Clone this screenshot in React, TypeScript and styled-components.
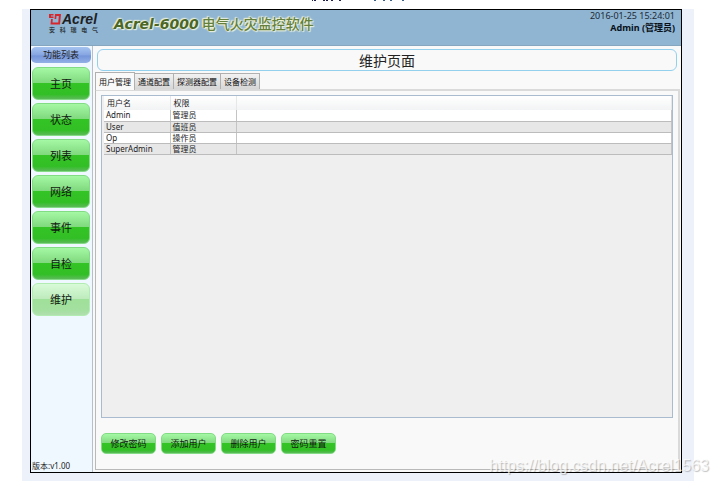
import React, { useState } from "react";
import styled, { createGlobalStyle } from "styled-components";

const Global = createGlobalStyle`
  * { box-sizing: border-box; }
  html, body, #root { height: 100%; }
  body { margin: 0; background: #fff; color: #222; overflow: hidden; font-family: "Noto Sans", "Noto Sans CJK SC", sans-serif; }
  button { font-family: inherit; cursor: pointer; }
`;

const Page = styled.div`
  position: relative;
  display: flex;
  flex-direction: column;
  height: 100vh;
  padding: 0 25px 4px 22px;
`;

const Caption = styled.div`
  display: flex;
  flex: none;
  justify-content: center;
  height: 9px;
`;

const Backdrop = styled.div`
  flex: 1;
  display: flex;
  min-height: 0;
  padding: 0 12px 8px 8px;
  background: #edf1fa;
`;

const Window = styled.div`
  flex: 1;
  display: flex;
  flex-direction: column;
  min-width: 0;
  border: 1px solid #000;
  background: #f9f9f9;
`;

const Header = styled.header`
  display: flex;
  flex: none;
  height: 36px;
  padding: 0 6px 0 18px;
  background: #8fb5d2;
  border-bottom: 1px solid #86a5be;
`;

const Brand = styled.div`
  display: flex;
  flex-direction: column;
  width: 52px;
  padding-top: 2px;
`;

const BrandTop = styled.div`
  display: flex;
  height: 14px;
  align-items: center;
  color: #1e1e22;
  font: italic 700 14px/14px "Liberation Sans", sans-serif;
`;

const BrandSub = styled.div`
  display: flex;
  justify-content: space-between;
  width: 49px;
  font-size: 6px;
  font-weight: 700;
  line-height: 8px;
  color: #333d46;
`;

const Product = styled.h1`
  margin: 0 0 0 13px;
  font: 500 14px/26px "Noto Sans CJK SC", sans-serif;
  white-space: nowrap;
  color: #64803c;
  text-shadow: 0 0 2px #f3f5dd, 0 0 2px #f3f5dd, 1px 1px 1px #eef2de, -1px -1px 1px #e4ead8;
  b { font: italic 700 14px/26px "DejaVu Sans", sans-serif; color: #4a6728; }
`;

const Session = styled.div`
  margin-left: auto;
  text-align: right;
  font-size: 9px;
  line-height: 12px;
  color: #1d2a36;
`;

const Line = styled.div<{ $strong?: boolean }>`
  font-weight: ${(p) => (p.$strong ? 700 : 400)};
  color: ${(p) => (p.$strong ? "#08101a" : "inherit")};
`;

const Body = styled.div`
  flex: 1;
  display: flex;
  min-height: 0;
`;

const Sidebar = styled.nav`
  display: flex;
  flex-direction: column;
  flex: none;
  width: 62px;
  padding: 1px 1px 0 0;
  background: #eff7ff;
  border-right: 1px solid #b5c0ca;
`;

const SidebarTitle = styled.div`
  flex: none;
  height: 16px;
  margin-bottom: 4px;
  border-radius: 5px;
  background: linear-gradient(#a5c3ef, #86a6e2 50%, #7495da 55%, #92afe5);
  font-size: 9px;
  line-height: 15px;
  text-align: center;
`;

const GreenButton = styled.button<{ $faded?: boolean }>`
  padding: 0;
  color: #101a10;
  border: 1px solid ${(p) => (p.$faded ? "#b2ecb2" : "#82dc84")};
  background: ${(p) =>
    p.$faded
      ? "linear-gradient(#d8fbd8, #bdeabc 49%, #9fe09a 50%, #a4e0a0 85%, #b0dfae)"
      : "linear-gradient(#a5f8a5, #7fd87c 49%, #34c425 50%, #32bf26 85%, #5cb95a)"};
`;

const NavButton = styled(GreenButton)`
  height: 33px;
  margin: 0 1px 3px;
  border-radius: 6px;
  font-size: 11px;
  line-height: 30px;
`;

const Version = styled.div`
  margin-top: auto;
  padding-left: 1px;
  font-size: 8px;
  line-height: 12px;
  white-space: nowrap;
`;

const Main = styled.main`
  flex: 1;
  display: flex;
  flex-direction: column;
  min-width: 0;
  padding: 3px 1px 2px 2px;
`;

const PageTitle = styled.h2`
  flex: none;
  height: 22px;
  margin: 0 3px 1px 2px;
  border: 1px solid #93d0ee;
  border-radius: 6px;
  font-size: 14px;
  font-weight: 400;
  line-height: 22px;
  text-align: center;
`;

const Tabs = styled.div`
  display: flex;
  flex: none;
  align-items: flex-end;
`;

const Tab = styled.button<{ $active: boolean }>`
  height: ${(p) => (p.$active ? 18 : 16)}px;
  margin-bottom: ${(p) => (p.$active ? -1 : 0)}px;
  padding: 0 3px;
  border: 1px solid #b0b0b0;
  border-left-width: ${(p) => (p.$active ? 1 : 0)}px;
  border-bottom: 0;
  background: ${(p) => (p.$active ? "#f9f9f9" : "linear-gradient(#f2f2f2, #d6d6d6)")};
  font-size: 8px;
  line-height: 14px;
  color: #111;
  z-index: 1;
`;

const Panel = styled.section`
  flex: 1;
  display: flex;
  flex-direction: column;
  min-height: 0;
  padding: 4px 5px 15px 5px;
  border: 1px solid #b9b9b9;
  border-top: 2px solid #dadada;
  border-right: 2px solid #dadada;
`;

const Grid = styled.div`
  flex: 1;
  min-height: 0;
  margin-bottom: 15px;
  padding-left: 2px;
  border: 1px solid #a9bbcf;
  background: #efefef;
`;

const Table = styled.table`
  width: 100%;
  table-layout: fixed;
  border-collapse: collapse;
  font-size: 8px;
  line-height: 10px;
  th, td { padding: 0 2px; text-align: left; font-weight: 400; white-space: nowrap; }
  th { height: 14px; padding-left: 3px; background: linear-gradient(#fff, #f2f3f4); border-right: 1px solid #e5e7e9; }
  td { height: 11px; border-right: 1px solid #c4c4c4; border-bottom: 1px solid #bcbcbc; background: #fff; }
  tr:nth-child(even) td { background: #e7e7e7; }
`;

const NameCol = styled.col`
  width: 66px;
`;

const Actions = styled.div`
  display: flex;
  flex: none;
  gap: 5px;
`;

const ActionButton = styled(GreenButton)`
  width: 55px;
  height: 21px;
  border-radius: 5px;
  font-size: 9px;
  line-height: 18px;
`;

const Watermark = styled.div`
  position: absolute;
  right: 10px;
  bottom: 10px;
  font: 16px/18px "Liberation Sans", sans-serif;
  color: rgba(255, 255, 255, 0.75);
  text-shadow: 1px 1px 1px rgba(0, 0, 0, 0.25);
  pointer-events: none;
`;

const Mark = () => (
  <svg width="13" height="13" viewBox="0 0 13 13" aria-hidden="true">
    <path d="M0 1h4.500v1.500H2v1h2.500V5H0z" fill="#d8262d" />
    <path d="M6 1h6l-1 10.500H1.500L2 6h1.800l-.3 3.500h5.800L9.800 3H7.500L7.200 6H5.500z" fill="#d8262d" />
  </svg>
);

const Strokes = () => (
  <svg width="94" height="2" viewBox="0 0 94 2" aria-hidden="true">
    <path d="M1 0h1v1H1zM3 0h2v1H3zM12 0h2v1h-2zM15 0h2v1h-2zM20 0h2v1h-2zM28 0h2v1h-2z" fill="#20204a" />
    <path d="M63 0h2v1h-2zM72 0h2v1h-2zM79 0h2v1h-2zM91 0h2v1h-2z" fill="#3a5e86" />
  </svg>
);

const menu = ["主页", "状态", "列表", "网络", "事件", "自检", "维护"];
const tabs = ["用户管理", "通道配置", "探测器配置", "设备检测"];
const users = [
  ["Admin", "管理员"],
  ["User", "值班员"],
  ["Op", "操作员"],
  ["SuperAdmin", "管理员"],
];
const actions = ["修改密码", "添加用户", "删除用户", "密码重置"];

export default function App() {
  const [page, setPage] = useState("维护");
  const [tab, setTab] = useState(tabs[0]);
  return (
    <Page>
      <Global />
      <Caption><Strokes /></Caption>
      <Backdrop>
        <Window>
          <Header>
            <Brand>
              <BrandTop><Mark />Acrel</BrandTop>
              <BrandSub>{[..."安科瑞电气"].map((c) => <span key={c}>{c}</span>)}</BrandSub>
            </Brand>
            <Product><b>Acrel-6000</b> 电气火灾监控软件</Product>
            <Session>
              <Line>2016-01-25 15:24:01</Line>
              <Line $strong>Admin (管理员)</Line>
            </Session>
          </Header>
          <Body>
            <Sidebar>
              <SidebarTitle>功能列表</SidebarTitle>
              {menu.map((m) => (
                <NavButton key={m} $faded={m === page} onClick={() => setPage(m)}>{m}</NavButton>
              ))}
              <Version>版本:v1.00</Version>
            </Sidebar>
            <Main>
              <PageTitle>维护页面</PageTitle>
              <Tabs role="tablist">
                {tabs.map((t) => (
                  <Tab key={t} role="tab" aria-selected={t === tab} $active={t === tab} onClick={() => setTab(t)}>{t}</Tab>
                ))}
              </Tabs>
              <Panel>
                <Grid>
                  <Table>
                    <colgroup><NameCol /><NameCol /><col /></colgroup>
                    <thead><tr><th>用户名</th><th>权限</th><th /></tr></thead>
                    <tbody>
                      {users.map(([name, role]) => (
                        <tr key={name}><td>{name}</td><td>{role}</td><td /></tr>
                      ))}
                    </tbody>
                  </Table>
                </Grid>
                <Actions>{actions.map((a) => <ActionButton key={a}>{a}</ActionButton>)}</Actions>
              </Panel>
            </Main>
          </Body>
        </Window>
      </Backdrop>
      <Watermark>https://blog.csdn.net/Acrel1563</Watermark>
    </Page>
  );
}
